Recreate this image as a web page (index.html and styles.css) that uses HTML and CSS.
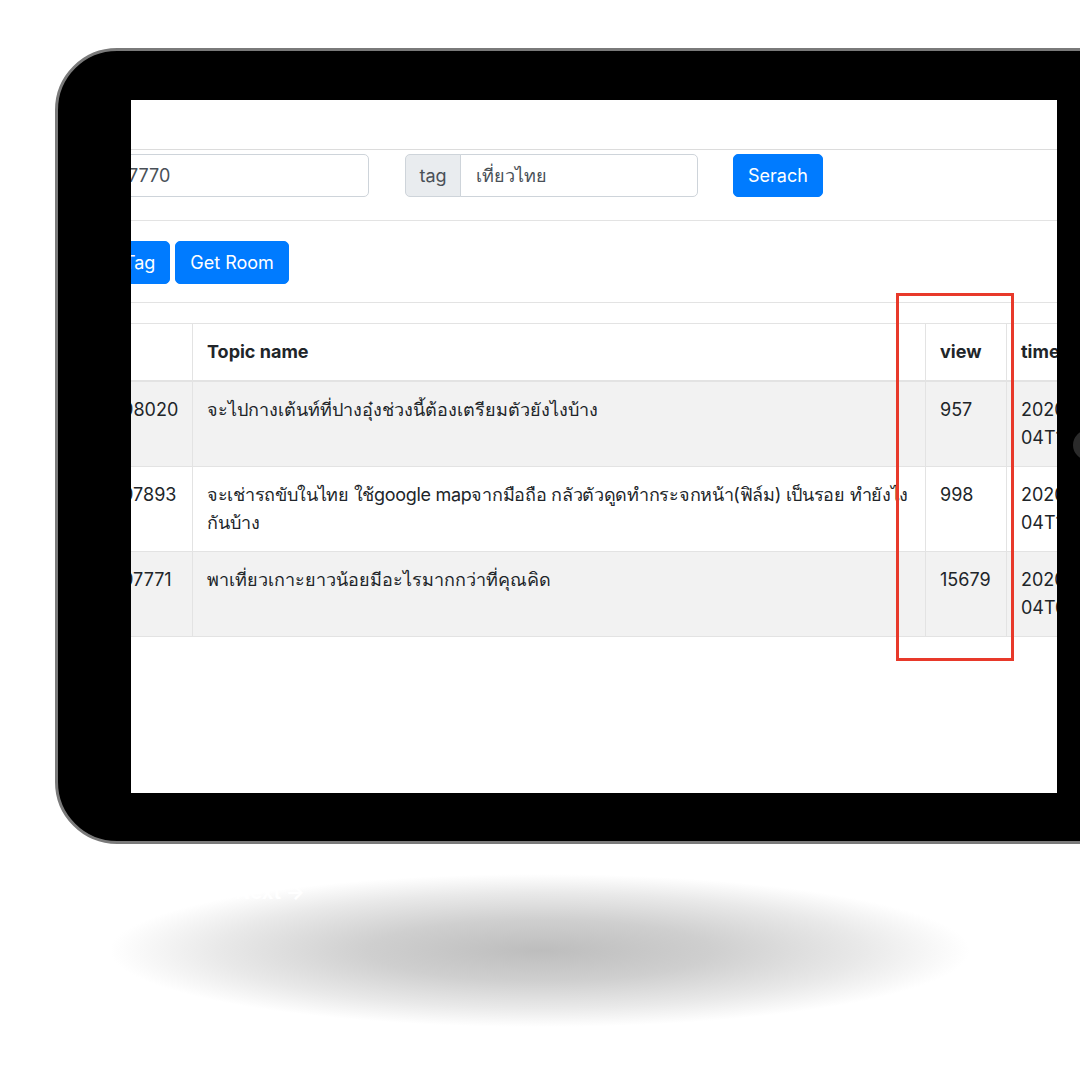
FILE: index.html
```html
<!DOCTYPE html>
<html lang="th">
<head>
  <meta charset="UTF-8">
  <meta name="viewport" content="width=device-width, initial-scale=1" />
  <title>Topic search</title>
  <link rel="stylesheet" href="styles.css">
</head>
<body>
  <div class="scene">
    <div class="tablet">
      <div class="screen">
        <div class="page">
          <div class="topbar"></div>

          <form class="search-row">
            <input class="form-control room-input" type="text" value="27770" />
            <div class="input-group">
              <span class="input-group-text">tag</span>
              <input class="form-control tag-input" type="text" value="เที่ยวไทย" />
            </div>
            <button type="button" class="btn">Serach</button>
          </form>

          <div class="action-row">
            <button type="button" class="btn">Get Tag</button>
            <button type="button" class="btn">Get Room</button>
          </div>

          <table class="topics">
            <thead>
              <tr>
                <th class="col-id">id</th>
                <th class="col-name">Topic name</th>
                <th class="col-view">view</th>
                <th class="col-time">time</th>
              </tr>
            </thead>
            <tbody>
              <tr>
                <td>3998020</td>
                <td>จะไปกางเต้นท์ที่ปางอุ๋งช่วงนี้ต้องเตรียมตัวยังไงบ้าง</td>
                <td>957</td>
                <td>2020-05-<br>04T10:21:43</td>
              </tr>
              <tr>
                <td>3997893</td>
                <td><span class="nowrap">จะเช่ารถขับในไทย ใช้google mapจากมือถือ กลัวตัวดูดทำกระจกหน้า(ฟิล์ม) เป็นรอย ทำยังไง</span><br>กันบ้าง</td>
                <td>998</td>
                <td>2020-05-<br>04T10:14:08</td>
              </tr>
              <tr>
                <td>3997771</td>
                <td>พาเที่ยวเกาะยาวน้อยมีอะไรมากกว่าที่คุณคิด</td>
                <td>15679</td>
                <td>2020-05-<br>04T09:02:51</td>
              </tr>
            </tbody>
          </table>
        </div>
      </div>
    </div>

    <div class="camera"></div>
    <div class="highlight"></div>

    <div class="floor-shadow">
      <span class="next-link">Next →</span>
    </div>
  </div>
</body>
</html>
```

FILE: styles.css
```css
* {
  box-sizing: border-box;
}

body {
  margin: 0;
  background: #fff;
  font-family: "Inter", "Noto Sans", sans-serif;
  color: #212529;
}

.scene {
  position: relative;
  width: 1080px;
  height: 1080px;
  overflow: hidden;
  padding-top: 48px;
}

.tablet {
  margin-left: 55px;
  width: 1140px;
  height: 796px;
  background: #000;
  border: 3px solid #7a7a7a;
  border-radius: 62px;
  padding: 49px 0 0 73px;
}

.screen {
  width: 926px;
  height: 693px;
  background: #fff;
  overflow: hidden;
}

.page {
  margin-left: -60px;
  width: 1200px;
  font-size: 18px;
  line-height: 28px;
}

.topbar {
  height: 50px;
  border-bottom: 1px solid #dcdcdc;
}

.search-row {
  display: flex;
  align-items: center;
  padding: 4px 0 23px 30px;
  border-bottom: 1px solid #e3e3e3;
  margin: 0;
}

.form-control {
  height: 43px;
  padding: 0 15px;
  font: inherit;
  color: #495057;
  background: #fff;
  border: 1px solid #ced4da;
  border-radius: 5px;
}

.room-input {
  width: 268px;
  margin-right: 36px;
}

.input-group {
  display: flex;
  margin-right: 35px;
}

.input-group-text {
  width: 56px;
  height: 43px;
  display: flex;
  align-items: center;
  justify-content: center;
  color: #495057;
  background: #e9ecef;
  border: 1px solid #ced4da;
  border-radius: 5px 0 0 5px;
}

.tag-input {
  width: 238px;
  margin-left: -1px;
  border-radius: 0 5px 5px 0;
}

.btn {
  height: 43px;
  padding: 0 14px;
  font: inherit;
  color: #fff;
  background: #007bff;
  border: 1px solid #007bff;
  border-radius: 5px;
}

.action-row {
  display: flex;
  gap: 5px;
  padding: 20px 0 18px 3px;
  border-bottom: 1px solid #e3e3e3;
}

.topics {
  margin: 20px 0 0 14px;
  border-collapse: collapse;
  table-layout: fixed;
  width: 1071px;
}

.topics th,
.topics td {
  padding: 14px;
  text-align: left;
  vertical-align: top;
  border: 1px solid #e3e3e3;
}

.topics th {
  font-weight: 700;
  border-bottom: 2px solid #e3e3e3;
}

.topics tbody tr:nth-child(odd) {
  background: #f2f2f2;
}

.nowrap {
  white-space: nowrap;
  letter-spacing: -0.3px;
}

.col-id { width: 107px; }
.col-name { width: 733px; }
.col-view { width: 81px; }
.col-time { width: 150px; }

.camera {
  position: absolute;
  left: 1073px;
  top: 430px;
  width: 30px;
  height: 30px;
  border-radius: 50%;
  background: #2b2b2b;
}

.highlight {
  position: absolute;
  left: 896px;
  top: 293px;
  width: 118px;
  height: 368px;
  border: 3px solid #e8392a;
}

.floor-shadow {
  margin: 30px 0 0 110px;
  width: 860px;
  height: 170px;
  padding: 6px 0 0 125px;
  background: radial-gradient(ellipse closest-side at 50% 45%, #bdbdbd 0%, #cfcfcf 40%, #e9e9e9 75%, rgba(255, 255, 255, 0) 100%);
}

.next-link {
  color: #fff;
  font-size: 20px;
  font-weight: 700;
}
```
